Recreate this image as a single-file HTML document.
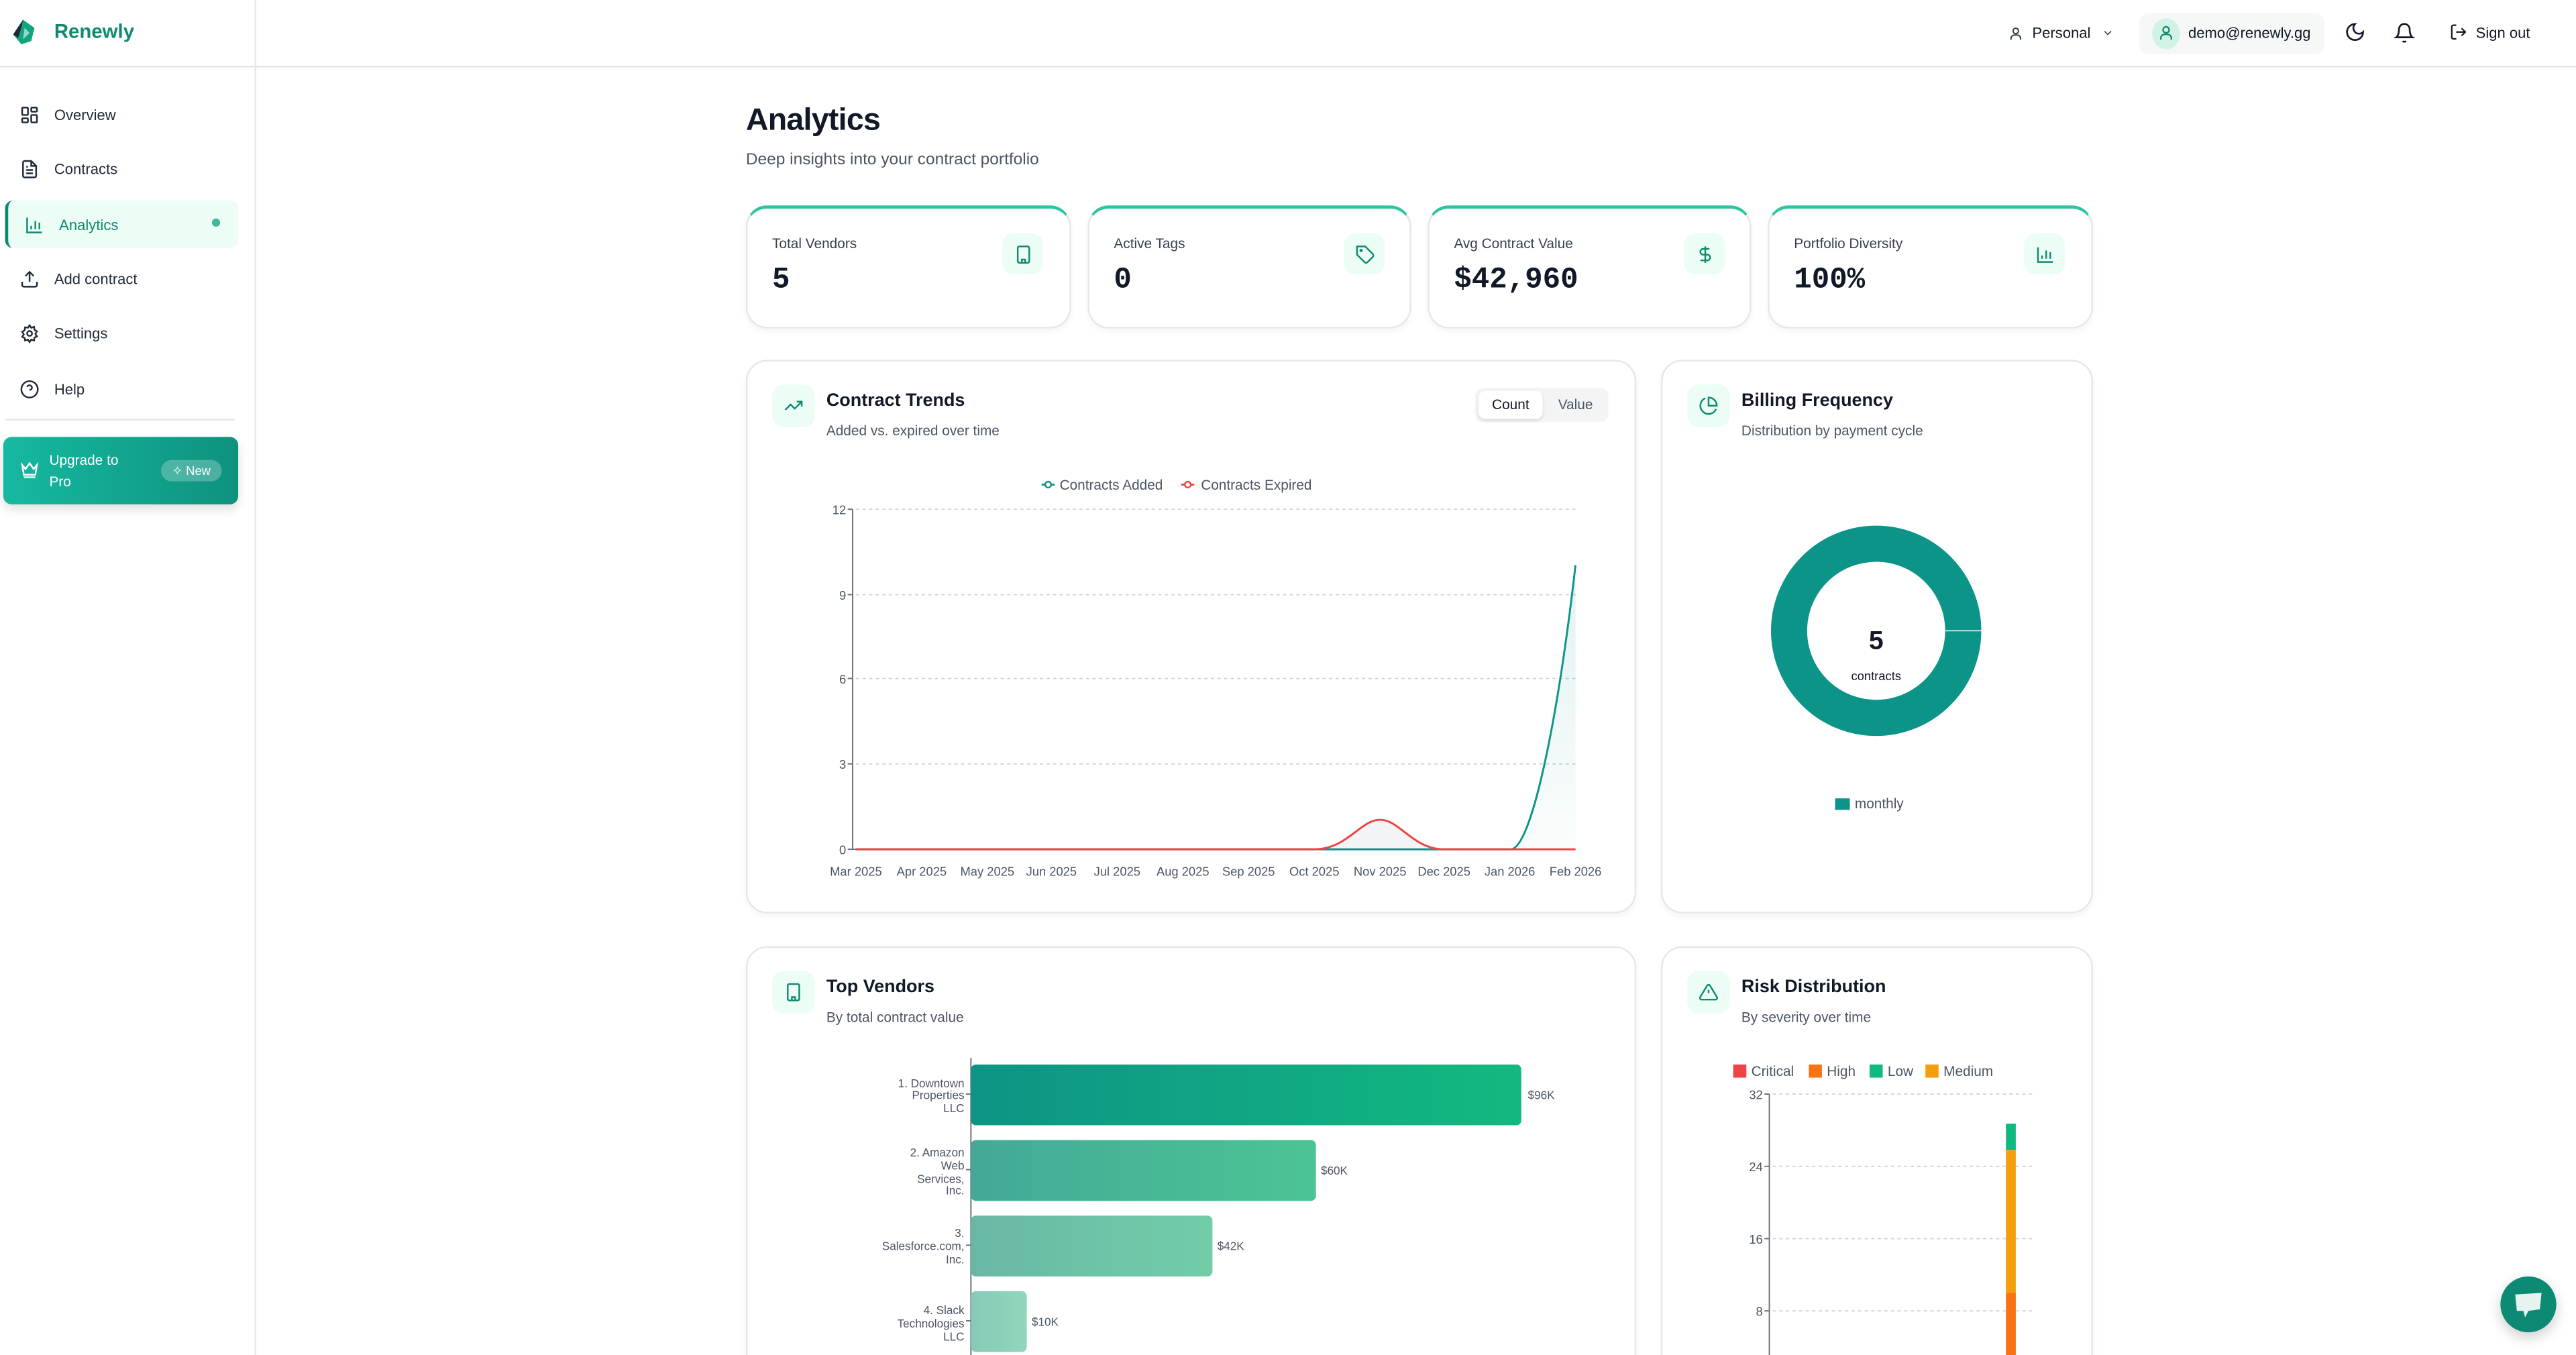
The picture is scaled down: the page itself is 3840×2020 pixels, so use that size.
<!DOCTYPE html>
<html><head><meta charset="utf-8">
<style>
html,body{margin:0;padding:0;width:3840px;height:2019px;overflow:hidden;background:#fff;}
#w{position:absolute;left:0;top:0;width:1568px;height:825px;overflow:hidden;transform:scale(2.44898);transform-origin:0 0;font-family:"Liberation Sans",sans-serif;color:#111827;}
.a{position:absolute;}
.nav{position:absolute;left:12px;font-size:9px;color:#1f2937;display:flex;align-items:center;gap:9px;}
.nav svg{width:12px;height:12px;}
.card{position:absolute;background:#fff;border:1px solid #e5e7eb;border-radius:13px;box-shadow:0 2px 4px rgba(0,0,0,.04);}
.stat{border-top:2px solid #2dc4a0;}
.lbl{position:absolute;left:15px;top:16px;font-size:8.5px;color:#374151;}
.val{position:absolute;left:15px;top:34px;font-size:18px;font-weight:bold;font-family:"Liberation Mono",monospace;color:#111827;}
.ib{position:absolute;width:25px;height:25px;border-radius:7px;background:#ecfdf5;display:flex;align-items:center;justify-content:center;}
.ib svg{width:12px;height:12px;}
.ttl{position:absolute;font-size:11px;font-weight:bold;color:#111827;}
.sub{position:absolute;font-size:8.5px;color:#4b5563;}
svg text{font-family:"Liberation Sans",sans-serif;}
</style></head><body><div id="w">
<!-- sidebar -->
<div class="a" style="left:0;top:0;width:155px;height:825px;border-right:1px solid #e8e8e8;"></div>
<div class="a" style="left:0;top:40px;width:1568px;height:1px;background:#e5e5e5;"></div>
<svg class="a" style="left:6px;top:11px" width="18" height="17" viewBox="0 0 18 17"><path d="M8 1 L15 6 L13 14 L7 16 L2 10 Z" fill="#14a37f"/><path d="M8 1 L2 10 L5 12 L7 6 Z" fill="#1f2937"/><path d="M9 6 L12 9 L8 13 Z" fill="#e6fff6" opacity=".6"/></svg>
<div class="a" style="left:33px;top:12px;font-size:12px;font-weight:bold;color:#0f8a70;">Renewly</div>

<div class="nav" style="top:64px"><svg viewBox="0 0 24 24" fill="none" stroke="#1f2937" stroke-width="2"><rect x="3" y="3" width="7" height="9" rx="1"/><rect x="14" y="3" width="7" height="5" rx="1"/><rect x="14" y="12" width="7" height="9" rx="1"/><rect x="3" y="16" width="7" height="5" rx="1"/></svg>Overview</div>
<div class="nav" style="top:97px"><svg viewBox="0 0 24 24" fill="none" stroke="#1f2937" stroke-width="2"><path d="M14 2H6a2 2 0 0 0-2 2v16a2 2 0 0 0 2 2h12a2 2 0 0 0 2-2V8z"/><path d="M14 2v6h6M16 13H8M16 17H8M10 9H8"/></svg>Contracts</div>
<div class="a" style="left:3px;top:122px;width:142px;height:29px;background:#ecfdf5;border-radius:5px;border-left:2px solid #0f8a70;box-sizing:border-box;"></div>
<div class="nav" style="top:131px;left:15px;color:#0f8a70;"><svg viewBox="0 0 24 24" fill="none" stroke="#0f8a70" stroke-width="2"><path d="M3 3v18h18M8 17v-4M13 17V7M18 17v-8"/></svg>Analytics</div>
<div class="a" style="left:129px;top:133px;width:5px;height:5px;border-radius:50%;background:#3fb89a;"></div>
<div class="nav" style="top:164px"><svg viewBox="0 0 24 24" fill="none" stroke="#1f2937" stroke-width="2"><path d="M21 15v4a2 2 0 0 1-2 2H5a2 2 0 0 1-2-2v-4M17 8l-5-5-5 5M12 3v12"/></svg>Add contract</div>
<div class="nav" style="top:197px"><svg viewBox="0 0 24 24" fill="none" stroke="#1f2937" stroke-width="2"><circle cx="12" cy="12" r="3"/><path d="M12 2l2 3 3.5-1 .5 3.5 3 2-2 3 2 3-3 1.5-.5 3.5-3.5-1-2 3-2-3-3.5 1L6 17.5 3 16l2-3-2-3 3-2L6.5 4.5 10 5z"/></svg>Settings</div>
<div class="nav" style="top:231px"><svg viewBox="0 0 24 24" fill="none" stroke="#1f2937" stroke-width="2"><circle cx="12" cy="12" r="10"/><path d="M9.1 9a3 3 0 0 1 5.8 1c0 2-3 3-3 3M12 17h.01"/></svg>Help</div>
<div class="a" style="left:3px;top:255px;width:140px;height:1px;background:#e5e7eb;"></div>
<div class="a" style="left:2px;top:266px;width:143px;height:41px;border-radius:5px;background:linear-gradient(90deg,#16b9a0,#0e927f);box-shadow:0 3px 6px rgba(0,0,0,.12);"></div>
<svg class="a" style="left:12px;top:280px" width="12" height="12" viewBox="0 0 24 24" fill="none" stroke="#fff" stroke-width="2"><path d="M3 6l4 5 5-7 5 7 4-5-2 12H5z M5 21h14"/></svg>
<div class="a" style="left:30px;top:274px;font-size:8.5px;line-height:12.5px;color:#fff;">Upgrade to<br>Pro</div>
<div class="a" style="left:98px;top:280px;width:37px;height:13px;border-radius:7px;background:rgba(255,255,255,.25);font-size:7.5px;color:#fff;line-height:13px;text-align:center;">✧ New</div>

<!-- header right -->
<svg class="a" style="left:1222px;top:15px" width="10" height="11" viewBox="0 0 24 24" fill="none" stroke="#374151" stroke-width="2"><circle cx="12" cy="8" r="4"/><path d="M5 21v-2a5 5 0 0 1 5-5h4a5 5 0 0 1 5 5v2"/></svg>
<div class="a" style="left:1237px;top:15px;font-size:9px;color:#111827;">Personal</div>
<svg class="a" style="left:1279px;top:16px" width="8" height="8" viewBox="0 0 24 24" fill="none" stroke="#374151" stroke-width="2"><path d="M6 9l6 6 6-6"/></svg>
<div class="a" style="left:1302px;top:8px;width:113px;height:25px;border-radius:6px;background:#f6f8f7;"></div>
<div class="a" style="left:1310px;top:11px;width:17px;height:19px;border-radius:50%;background:#d1f3e6;"></div>
<svg class="a" style="left:1313px;top:14px" width="11" height="12" viewBox="0 0 24 24" fill="none" stroke="#0f8a70" stroke-width="2"><circle cx="12" cy="8" r="4"/><path d="M5 21v-2a5 5 0 0 1 5-5h4a5 5 0 0 1 5 5v2"/></svg>
<div class="a" style="left:1332px;top:15px;font-size:9px;color:#111827;">demo@renewly.gg</div>
<svg class="a" style="left:1427px;top:13px" width="13" height="13" viewBox="0 0 24 24" fill="none" stroke="#111827" stroke-width="2"><path d="M12 3a6 6 0 0 0 9 9 9 9 0 1 1-9-9z"/></svg>
<svg class="a" style="left:1457px;top:13px" width="13" height="14" viewBox="0 0 24 24" fill="none" stroke="#111827" stroke-width="2"><path d="M6 8a6 6 0 0 1 12 0c0 7 3 9 3 9H3s3-2 3-9M10.3 21a1.9 1.9 0 0 0 3.4 0"/></svg>
<svg class="a" style="left:1491px;top:14px" width="11" height="11" viewBox="0 0 24 24" fill="none" stroke="#111827" stroke-width="2"><path d="M9 21H5a2 2 0 0 1-2-2V5a2 2 0 0 1 2-2h4M16 17l5-5-5-5M21 12H9"/></svg>
<div class="a" style="left:1507px;top:15px;font-size:9px;color:#111827;">Sign out</div>

<!-- title -->
<div class="a" style="left:454px;top:63px;font-size:19px;font-weight:bold;color:#111827;letter-spacing:-.3px;">Analytics</div>
<div class="a" style="left:454px;top:92px;font-size:10px;color:#4b5563;">Deep insights into your contract portfolio</div>

<!-- stats -->
<div class="card stat" style="left:454px;top:125px;width:196px;height:72px;"><div class="lbl">Total Vendors</div><div class="val">5</div>
<div class="ib" style="left:155px;top:15px"><svg viewBox="0 0 24 24" fill="none" stroke="#0f8a70" stroke-width="2"><rect x="5" y="2" width="14" height="20" rx="2"/><path d="M9 6h.01M12 6h.01M15 6h.01M9 10h.01M12 10h.01M15 10h.01M9 14h.01M15 14h.01M10 22v-4h4v4"/></svg></div></div>
<div class="card stat" style="left:662px;top:125px;width:195px;height:72px;"><div class="lbl">Active Tags</div><div class="val">0</div>
<div class="ib" style="left:155px;top:15px"><svg viewBox="0 0 24 24" fill="none" stroke="#0f8a70" stroke-width="2"><path d="M12 2H2v10l9.3 9.3a2.4 2.4 0 0 0 3.4 0l6.6-6.6a2.4 2.4 0 0 0 0-3.4z"/><circle cx="7" cy="7" r="1"/></svg></div></div>
<div class="card stat" style="left:869px;top:125px;width:195px;height:72px;"><div class="lbl">Avg Contract Value</div><div class="val">$42,960</div>
<div class="ib" style="left:155px;top:15px"><svg viewBox="0 0 24 24" fill="none" stroke="#0f8a70" stroke-width="2"><path d="M12 2v20M17 5H9.5a3.5 3.5 0 0 0 0 7h5a3.5 3.5 0 0 1 0 7H6"/></svg></div></div>
<div class="card stat" style="left:1076px;top:125px;width:196px;height:72px;"><div class="lbl">Portfolio Diversity</div><div class="val">100%</div>
<div class="ib" style="left:155px;top:15px"><svg viewBox="0 0 24 24" fill="none" stroke="#0f8a70" stroke-width="2"><path d="M3 3v18h18M8 17v-4M13 17V7M18 17v-8"/></svg></div></div>

<!-- contract trends -->
<div class="card" style="left:454px;top:219px;width:540px;height:335px;"></div>
<div class="ib" style="left:470px;top:234px;width:26px;height:26px;"><svg viewBox="0 0 24 24" fill="none" stroke="#0f8a70" stroke-width="2"><path d="M22 7l-8.5 8.5-5-5L2 17M16 7h6v6"/></svg></div>
<div class="ttl" style="left:503px;top:238px;">Contract Trends</div>
<div class="sub" style="left:503px;top:257px;">Added vs. expired over time</div>
<div class="a" style="left:898px;top:236px;width:81px;height:21px;border-radius:5px;background:#f3f4f6;"></div>
<div class="a" style="left:900px;top:238px;width:39px;height:17px;border-radius:4px;background:#fff;box-shadow:0 1px 2px rgba(0,0,0,.1);font-size:8.5px;line-height:17px;text-align:center;color:#111827;">Count</div>
<div class="a" style="left:941px;top:238px;width:36px;height:17px;font-size:8.5px;line-height:17px;text-align:center;color:#4b5563;">Value</div>
<svg class="a" style="left:0;top:0" width="1568" height="825">
<defs><linearGradient id="ga" x1="0" y1="0" x2="0" y2="1"><stop offset="0" stop-color="#0d9488" stop-opacity=".12"/><stop offset="1" stop-color="#0d9488" stop-opacity=".02"/></linearGradient>
<linearGradient id="b1" x1="0" x2="1"><stop offset="0" stop-color="#0e9485"/><stop offset="1" stop-color="#12b980"/></linearGradient>
<linearGradient id="b2" x1="0" x2="1"><stop offset="0" stop-color="#43a996"/><stop offset="1" stop-color="#4cc495"/></linearGradient>
<linearGradient id="b3" x1="0" x2="1"><stop offset="0" stop-color="#69b8a6"/><stop offset="1" stop-color="#71cda8"/></linearGradient>
<linearGradient id="b4" x1="0" x2="1"><stop offset="0" stop-color="#87c9b9"/><stop offset="1" stop-color="#8fd8bb"/></linearGradient></defs>
<g font-size="7.5" fill="#4b5563">
<line x1="634" y1="295" x2="642" y2="295" stroke="#0d9488" stroke-width="1.2"/><circle cx="638" cy="295" r="1.8" fill="#fff" stroke="#0d9488"/><text x="645" y="298" font-size="8.5">Contracts Added</text>
<line x1="719" y1="295" x2="727" y2="295" stroke="#ef4444" stroke-width="1.2"/><circle cx="723" cy="295" r="1.8" fill="#fff" stroke="#ef4444"/><text x="731" y="298" font-size="8.5">Contracts Expired</text>
<g stroke="#d1d5db" stroke-dasharray="2,2" stroke-width=".8"><line x1="521" y1="310" x2="959" y2="310"/><line x1="521" y1="362" x2="959" y2="362"/><line x1="521" y1="413" x2="959" y2="413"/><line x1="521" y1="465" x2="959" y2="465"/></g>
<line x1="519" y1="310" x2="519" y2="517" stroke="#6b7280" stroke-width=".8"/>
<g stroke="#6b7280" stroke-width=".8"><line x1="516" y1="310" x2="519" y2="310"/><line x1="516" y1="362" x2="519" y2="362"/><line x1="516" y1="413" x2="519" y2="413"/><line x1="516" y1="465" x2="519" y2="465"/><line x1="516" y1="517" x2="519" y2="517"/></g>
<g text-anchor="end"><text x="515" y="313">12</text><text x="515" y="365">9</text><text x="515" y="416">6</text><text x="515" y="468">3</text><text x="515" y="520">0</text></g>
<line x1="519" y1="517" x2="959" y2="517" stroke="#6b7280" stroke-width=".8"/>
<g text-anchor="middle"><text x="521" y="533">Mar 2025</text><text x="561" y="533">Apr 2025</text><text x="601" y="533">May 2025</text><text x="640" y="533">Jun 2025</text><text x="680" y="533">Jul 2025</text><text x="720" y="533">Aug 2025</text><text x="760" y="533">Sep 2025</text><text x="800" y="533">Oct 2025</text><text x="840" y="533">Nov 2025</text><text x="879" y="533">Dec 2025</text><text x="919" y="533">Jan 2026</text><text x="959" y="533">Feb 2026</text></g>
<path d="M919.5,517 C932,517 948,440 959,344 L959,517 Z" fill="url(#ga)"/>
<path d="M800,517 C820,517 828,499 840,499 C852,499 860,517 879,517 Z" fill="#f3f4f6"/>
<line x1="521" y1="517" x2="919" y2="517" stroke="#0d9488" stroke-width="1.2"/>
<path d="M919.5,517 C932,517 948,440 959,344" fill="none" stroke="#0d9488" stroke-width="1.2"/>
<path d="M521,517 L800,517 C820,517 828,499 840,499 C852,499 860,517 879,517 L959,517" fill="none" stroke="#ef4444" stroke-width="1.2"/>
</g>
<!-- donut -->
<circle cx="1142" cy="384" r="53" fill="none" stroke="#0d9488" stroke-width="22"/>
<line x1="1184" y1="384" x2="1206" y2="384" stroke="#fff" stroke-width=".6"/>
<text x="1142" y="395" text-anchor="middle" font-size="16" font-weight="bold" fill="#111827">5</text>
<text x="1142" y="414" text-anchor="middle" font-size="7.5" fill="#111827">contracts</text>
<rect x="1117" y="486" width="9" height="7" fill="#0d9488"/><text x="1129" y="492" font-size="8.5" fill="#4b5563">monthly</text>
<!-- vendors -->
<g font-size="7" fill="#4b5563" text-anchor="end">
<line x1="591" y1="644" x2="591" y2="825" stroke="#6b7280" stroke-width=".8"/>
<rect x="591" y="648" width="335" height="37" rx="3" fill="url(#b1)"/>
<rect x="591" y="694" width="210" height="37" rx="3" fill="url(#b2)"/>
<rect x="591" y="740" width="147" height="37" rx="3" fill="url(#b3)"/>
<rect x="591" y="786" width="34" height="37" rx="3" fill="url(#b4)"/>
<g stroke="#6b7280" stroke-width=".8"><line x1="588" y1="666" x2="591" y2="666"/><line x1="588" y1="712" x2="591" y2="712"/><line x1="588" y1="758" x2="591" y2="758"/><line x1="588" y1="804" x2="591" y2="804"/></g>
<text x="587" y="662">1. Downtown</text><text x="587" y="669">Properties</text><text x="587" y="677">LLC</text>
<text x="587" y="704">2. Amazon</text><text x="587" y="712">Web</text><text x="587" y="720">Services,</text><text x="587" y="727">Inc.</text>
<text x="587" y="753">3.</text><text x="587" y="761">Salesforce.com,</text><text x="587" y="769">Inc.</text>
<text x="587" y="800">4. Slack</text><text x="587" y="808">Technologies</text><text x="587" y="816">LLC</text>
<g text-anchor="start"><text x="930" y="669">$96K</text><text x="804" y="715">$60K</text><text x="741" y="761">$42K</text><text x="628" y="807">$10K</text></g>
</g>
<!-- risk -->
<g font-size="8.5" fill="#4b5563">
<rect x="1055" y="648" width="8" height="8" fill="#ef4444"/><text x="1066" y="655">Critical</text>
<rect x="1101" y="648" width="8" height="8" fill="#f97316"/><text x="1112" y="655">High</text>
<rect x="1138" y="648" width="8" height="8" fill="#10b981"/><text x="1149" y="655">Low</text>
<rect x="1172" y="648" width="8" height="8" fill="#f59e0b"/><text x="1183" y="655">Medium</text>
<g stroke="#d1d5db" stroke-dasharray="2,2" stroke-width=".8"><line x1="1079" y1="666" x2="1238" y2="666"/><line x1="1079" y1="710" x2="1238" y2="710"/><line x1="1079" y1="754" x2="1238" y2="754"/><line x1="1079" y1="798" x2="1238" y2="798"/></g>
<line x1="1077" y1="666" x2="1077" y2="825" stroke="#6b7280" stroke-width=".8"/>
<g stroke="#6b7280" stroke-width=".8"><line x1="1074" y1="666" x2="1077" y2="666"/><line x1="1074" y1="710" x2="1077" y2="710"/><line x1="1074" y1="754" x2="1077" y2="754"/><line x1="1074" y1="798" x2="1077" y2="798"/></g>
<g text-anchor="end" font-size="7.5"><text x="1073" y="669">32</text><text x="1073" y="713">24</text><text x="1073" y="757">16</text><text x="1073" y="801">8</text></g>
<rect x="1221" y="684" width="6" height="16" fill="#10b981"/><rect x="1221" y="700" width="6" height="87" fill="#f59e0b"/><rect x="1221" y="787" width="6" height="38" fill="#f97316"/>
</g>
</svg>

<!-- billing card -->
<div class="card" style="left:1011px;top:219px;width:261px;height:335px;background:transparent;"></div>
<div class="ib" style="left:1027px;top:234px;width:26px;height:26px;"><svg viewBox="0 0 24 24" fill="none" stroke="#0f8a70" stroke-width="2"><path d="M21.2 15.9A10 10 0 1 1 8 2.8"/><path d="M22 12A10 10 0 0 0 12 2v10z"/></svg></div>
<div class="ttl" style="left:1060px;top:238px;">Billing Frequency</div>
<div class="sub" style="left:1060px;top:257px;">Distribution by payment cycle</div>

<!-- vendors card -->
<div class="card" style="left:454px;top:576px;width:540px;height:270px;background:transparent;"></div>
<div class="ib" style="left:470px;top:591px;width:26px;height:26px;"><svg viewBox="0 0 24 24" fill="none" stroke="#0f8a70" stroke-width="2"><rect x="5" y="2" width="14" height="20" rx="2"/><path d="M9 6h.01M12 6h.01M15 6h.01M9 10h.01M12 10h.01M15 10h.01M9 14h.01M15 14h.01M10 22v-4h4v4"/></svg></div>
<div class="ttl" style="left:503px;top:595px;">Top Vendors</div>
<div class="sub" style="left:503px;top:614px;">By total contract value</div>

<!-- risk card -->
<div class="card" style="left:1011px;top:576px;width:261px;height:270px;background:transparent;"></div>
<div class="ib" style="left:1027px;top:591px;width:26px;height:26px;"><svg viewBox="0 0 24 24" fill="none" stroke="#0f8a70" stroke-width="2"><path d="M10.3 3.9L1.8 18a2 2 0 0 0 1.7 3h17a2 2 0 0 0 1.7-3L13.7 3.9a2 2 0 0 0-3.4 0zM12 9v4M12 17h.01"/></svg></div>
<div class="ttl" style="left:1060px;top:595px;">Risk Distribution</div>
<div class="sub" style="left:1060px;top:614px;">By severity over time</div>

<!-- chat -->
<div class="a" style="left:1522px;top:777px;width:34px;height:34px;border-radius:50%;background:#0d8a74;box-shadow:0 3px 8px rgba(0,0,0,.2);"></div>
<svg class="a" style="left:1530px;top:786px" width="18" height="17" viewBox="0 0 18 17"><path d="M1 2 L17 1 L16 11 L9 12 L7 16 L6 12 L2 12 Z" fill="#e6f4f0"/></svg>
</div></body></html>
